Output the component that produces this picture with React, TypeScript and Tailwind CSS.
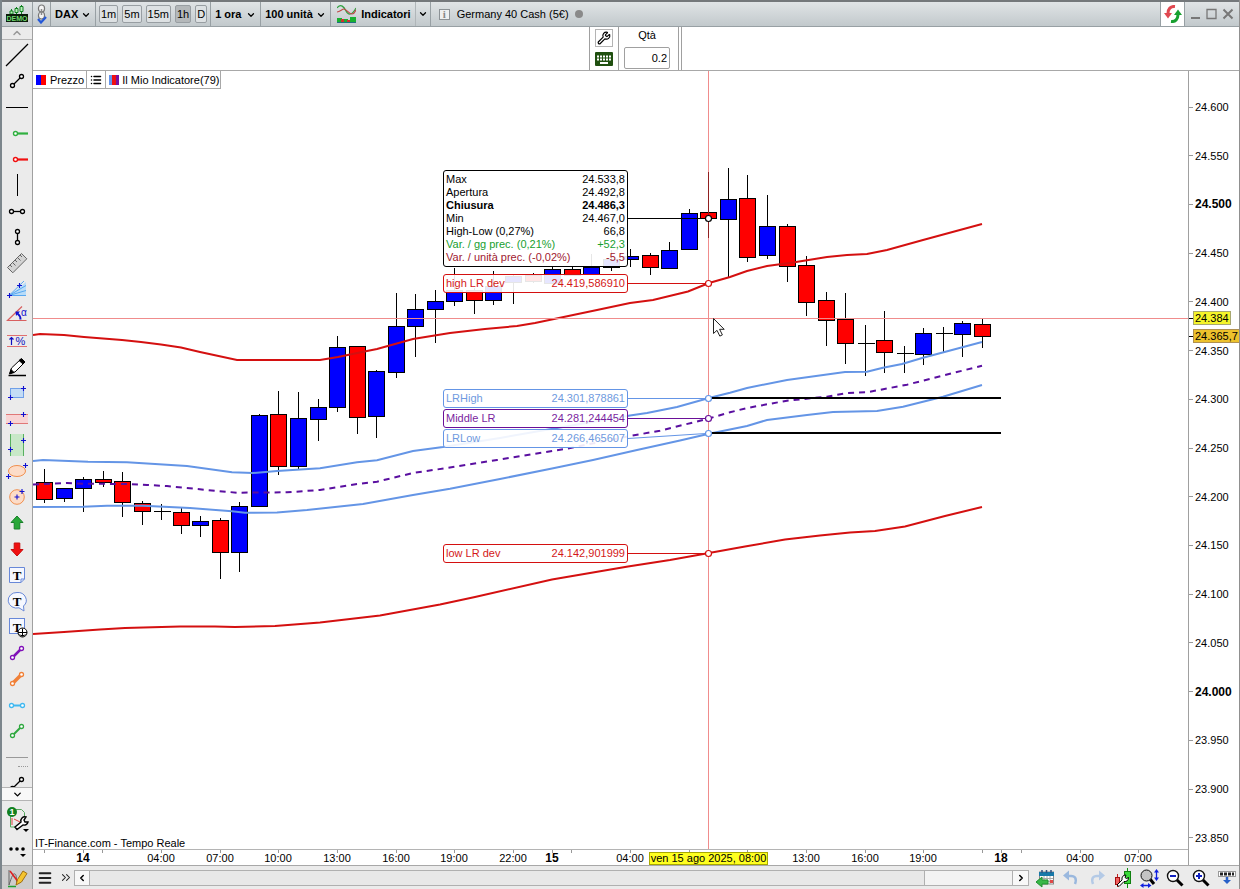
import {ReactNode} from 'react';
import {ChevronDown, ChevronLeft, ChevronRight, ChevronUp, ChevronsRight, List, Menu, Wrench} from 'lucide-react';

const BLUE = '#0000ff';
const RED = '#ff0000';

// [high, body top, body bottom, low, direction]
type Candle = [number, number, number, number, 'up' | 'down' | 'flat'];

const candles: Candle[] = [
	[469, 482, 499, 502, 'down'],
	[488, 488, 498, 501, 'up'],
	[477, 479, 488, 511, 'up'],
	[471, 479, 482, 486, 'down'],
	[472, 481, 502, 516, 'down'],
	[501, 503, 511, 524, 'down'],
	[504, 511, 511, 519, 'flat'],
	[508, 512, 525, 533, 'down'],
	[516, 521, 525, 536, 'up'],
	[518, 520, 552, 578, 'down'],
	[502, 506, 552, 571, 'up'],
	[414, 415, 506, 506, 'up'],
	[391, 414, 466, 474, 'down'],
	[392, 418, 466, 469, 'up'],
	[399, 407, 419, 440, 'up'],
	[336, 347, 407, 411, 'up'],
	[346, 346, 417, 433, 'down'],
	[370, 371, 416, 437, 'up'],
	[293, 326, 372, 377, 'up'],
	[294, 309, 326, 356, 'up'],
	[290, 301, 309, 342, 'up'],
	[268, 290, 301, 305, 'up'],
	[288, 290, 300, 313, 'down'],
	[271, 286, 300, 304, 'up'],
	[274, 276, 282, 303, 'up'],
	[273, 275, 281, 282, 'down'],
	[266, 269, 283, 283, 'up'],
	[267, 269, 275, 275, 'down'],
	[254, 267, 274, 274, 'up'],
	[250, 259, 267, 270, 'up'],
	[249, 256, 259, 266, 'up'],
	[253, 255, 267, 274, 'down'],
	[242, 250, 268, 268, 'up'],
	[209, 213, 249, 249, 'up'],
	[172, 212, 218, 238, 'down'],
	[168, 199, 219, 276, 'up'],
	[175, 198, 257, 261, 'down'],
	[195, 226, 255, 258, 'up'],
	[224, 226, 266, 281, 'down'],
	[256, 265, 302, 315, 'down'],
	[292, 300, 320, 345, 'down'],
	[293, 319, 343, 363, 'down'],
	[325, 343, 343, 375, 'flat'],
	[311, 340, 352, 372, 'down'],
	[346, 353, 353, 372, 'flat'],
	[328, 333, 354, 364, 'up'],
	[327, 333, 333, 351, 'flat'],
	[321, 323, 334, 356, 'up'],
	[319, 324, 336, 347, 'down'],
];

const barX = (i: number) => Math.round(44 + 19.54 * i) + 0.5;

const highDev =
	'33,335 40,334 64,335 84,337 103,338.5 122,340 141,342 161,344.5 181,347.5 200,352 237,360 320,360 338,357 367,351 377,349 413,339 450,333 485,329 517,326 535,323 597,310 630,303 653,300 688,291.5 709,283 730,277 747,271 767,266 793,262.5 827,257 847,255 867,254 887,250 923,240 982,224';
const lrHigh =
	'33,461 43,460 88,461.7 127,462.3 187,466 232,472.3 253,473 277,471 320,468.3 357,462.3 377,460.3 413,451 443,447 500,438 557,428 630,415.5 647,413 677,407 709,398 730,392.7 747,388 787,380 845,372 867,371.7 883,367.7 902,364 923,357.7 982,342';
const lrMiddle =
	'33,484.5 67,483 83,483.7 127,484 147,485 167,486 207,490 237,492.7 287,492.3 320,490 357,484 377,481.7 413,473 447,468 497,460 565,449 630,436 660,430.7 709,418.5 730,412.3 747,408 787,400.7 827,396.7 847,393 867,392.3 907,384.7 982,365.7';
const lrLow =
	'33,507 83,506.7 107,505.7 143,505.7 190,508 232,511.3 245,512.7 277,512.5 307,510 363,504 413,495 450,488.7 500,479 552,468.5 593,460 637,450 680,440.5 709,433.7 747,426 767,420 807,415 833,412 877,411 903,406.7 943,396.7 982,385';
const lowDev =
	'33,634 64,632 100,629.5 125,628 180,626.5 215,626.5 235,627 275,626 320,622.5 380,615.5 440,604.5 475,597 552,579.5 628,566.5 670,560 709,553 745,546.5 785,539.5 820,535.5 850,532.5 875,531 905,526.5 945,516 982,507';

const timeLabels: [number, string, boolean?][] = [
	[83, '14', true],
	[161, '04:00'],
	[220, '07:00'],
	[278, '10:00'],
	[337, '13:00'],
	[396, '16:00'],
	[454, '19:00'],
	[513, '22:00'],
	[552, '15', true],
	[630, '04:00'],
	[806, '13:00'],
	[865, '16:00'],
	[923, '19:00'],
	[1001, '18', true],
	[1080, '04:00'],
	[1138, '07:00'],
];
const timeTicks = [44, 83, 102, 161, 220, 278, 337, 396, 454, 513, 552, 571, 630, 689, 747, 806, 865, 923, 982, 1001, 1021, 1080, 1138];

const prices = [
	'24.600', '24.550', '24.500', '24.450', '24.400', '24.350', '24.300', '24.250',
	'24.200', '24.150', '24.100', '24.050', '24.000', '23.950', '23.900', '23.850',
];

function Plot() {
	return (
		<svg className="absolute inset-0 h-full w-full" aria-hidden="true">
			<g transform="translate(-33 -71)">
				{candles.map(([high, top, bottom, low, dir], i) => {
					const x = barX(i);
					return (
						<g key={i} stroke="#000" shapeRendering="crispEdges">
							<line x1={x} x2={x} y1={high} y2={low + 1} />
							{dir === 'flat' ? (
								<line x1={x - 8} x2={x + 9} y1={top + 0.5} y2={top + 0.5} />
							) : (
								<rect x={x - 8} y={top + 0.5} width="16" height={bottom - top} fill={dir === 'up' ? BLUE : RED} />
							)}
						</g>
					);
				})}
				<g fill="none" strokeWidth="2">
					<polyline points={highDev} stroke="#d41010" />
					<polyline points={lowDev} stroke="#d41010" />
					<polyline points={lrHigh} stroke="#6495e6" />
					<polyline points={lrLow} stroke="#6495e6" />
					<polyline points={lrMiddle} stroke="#5a0fa0" strokeDasharray="6 5" />
				</g>
				<g stroke="#000" strokeWidth="2" shapeRendering="crispEdges">
					<line x1="709" x2="1001" y1="398" y2="398" />
					<line x1="709" x2="1001" y1="433" y2="433" />
				</g>
				<g stroke="#f08c8c" shapeRendering="crispEdges">
					<line x1="708.5" x2="708.5" y1="71" y2="850" />
					<line x1="33" x2="1189" y1="318.5" y2="318.5" />
				</g>
				<line x1="708.5" x2="708.5" y1="172" y2="238" stroke="#902020" />
				<g shapeRendering="crispEdges">
					<path d="M628 218.5H706" stroke="#000" />
					<path d="M628 283.5H706M628 553.5H706" stroke="#d41010" />
					<path d="M628 398.5H706" stroke="#6495e6" />
					<path d="M628 418.5H706" stroke="#6a0f98" />
				</g>
				<path d="M628 438.5L706 433.5" stroke="#6495e6" />
				<g strokeWidth="1.2" fill="#fff">
					<circle cx="708.5" cy="218.5" r="3" stroke="#000" />
					<circle cx="708.5" cy="283.5" r="3" stroke="#d41010" />
					<circle cx="708.5" cy="398.5" r="3" stroke="#6495e6" />
					<circle cx="708.5" cy="418.5" r="3" stroke="#6a0f98" />
					<circle cx="708.5" cy="433.5" r="3" stroke="#6495e6" />
					<circle cx="708.5" cy="553.5" r="3" stroke="#d41010" />
				</g>
				<path d="M713.5 318.5v15l3.5-3.2 2.8 5.8 2.6-1.2-2.8-5.6h4.6z" fill="#fff" stroke="#222" />
			</g>
		</svg>
	);
}

function TimeAxis() {
	return (
		<div className="relative h-4 shrink-0 border-t border-[#b4b4b4]">
			<svg className="absolute inset-0 h-full w-full">
				<g transform="translate(-33 0)" fontFamily="Liberation Sans, Arial, sans-serif">
					{timeTicks.map((x) => (
						<line key={x} x1={x + 0.5} x2={x + 0.5} y1="0" y2="3" stroke="#999" />
					))}
					{timeLabels.map(([x, label, bold]) => (
						<text key={x} x={x} y="12" textAnchor="middle" fontSize={bold ? 12 : 11} fontWeight={bold ? 700 : 400}>
							{label}
						</text>
					))}
				</g>
			</svg>
			<div className="absolute top-[2px] left-[616px] w-[119px] border border-[#a8a800] bg-[#ffff20] text-center leading-[11px]">
				ven 15 ago 2025, 08:00
			</div>
		</div>
	);
}

function PriceAxis() {
	return (
		<div className="relative w-[51px] shrink-0 border-l border-[#a0a0a0]">
			<div className="flex h-full flex-col justify-between pt-7 pb-[19px]">
				{prices.map((p) => (
					<div key={p} className="flex items-center gap-[2px] leading-4">
						<span className="h-px w-1 bg-[#999]" />
						<span className={p === '24.500' || p === '24.000' ? 'text-xs leading-4 font-bold' : ''}>{p}</span>
					</div>
				))}
			</div>
			<div className="absolute top-[240px] left-0 flex items-center">
				<span className="h-px w-1 bg-black" />
				<span className="border border-[#a8a870] bg-[#f4f42a] px-px leading-3">24.384</span>
			</div>
			<div className="absolute top-[258px] left-0 flex items-center">
				<span className="h-px w-1 bg-black" />
				<span className="border border-[#b09050] bg-[#ecc12c] px-px leading-3">24.365,7</span>
			</div>
		</div>
	);
}

const details = [
	['Max', '24.533,8', ''],
	['Apertura', '24.492,8', ''],
	['Chiusura', '24.486,3', 'font-bold'],
	['Min', '24.467,0', ''],
	['High-Low (0,27%)', '66,8', ''],
	['Var. / gg prec. (0,21%)', '+52,3', 'text-[#18a030]'],
	['Var. / unità prec. (-0,02%)', '-5,5', 'text-[#a02030]'],
];

const readouts = [
	['high LR dev', '24.419,586910', 'top-[203px] border-[#d41010] text-[#d41818]'],
	['LRHigh', '24.301,878861', 'top-[318px] border-[#6495e6] text-[#6f9ae0]'],
	['Middle LR', '24.281,244454', 'top-[338px] border-[#6a0f98] text-[#7a1fa0]'],
	['LRLow', '24.266,465607', 'top-[358px] border-[#6495e6] text-[#6f9ae0]'],
	['low LR dev', '24.142,901999', 'top-[473px] border-[#d41010] text-[#d41818]'],
];

function Readouts() {
	return (
		<>
			<div className="absolute top-[99px] left-[410px] w-[185px] rounded-[3px] border border-black bg-white/90 px-[2px] py-[2px] leading-[13px]">
				{details.map(([label, value, cls]) => (
					<div key={label} className={`flex justify-between ${cls}`}>
						<span>{label}</span>
						<span>{value}</span>
					</div>
				))}
			</div>
			{readouts.map(([label, value, cls]) => (
				<div
					key={label}
					className={`absolute left-[410px] flex h-[19px] w-[185px] justify-between rounded-[3px] border bg-white/90 px-[2px] leading-[17px] ${cls}`}
				>
					<span>{label}</span>
					<span>{value}</span>
				</div>
			))}
		</>
	);
}

function Segment({color, width = 1.3, dir = 'diag'}: {color: string; width?: number; dir?: 'diag' | 'h' | 'v'}) {
	const [x1, y1, x2, y2] = dir === 'diag' ? [7.5, 16.5, 16.5, 7.5] : dir === 'h' ? [6.5, 12.5, 17.5, 12.5] : [12.5, 6.5, 12.5, 17.5];
	return (
		<>
			<line x1={x1} y1={y1} x2={x2} y2={y2} stroke={color} strokeWidth={width} />
			<circle cx={x1} cy={y1} r="2" fill="#fff" stroke={color} strokeWidth="1.3" />
			<circle cx={x2} cy={y2} r="2" fill="#fff" stroke={color} strokeWidth="1.3" />
		</>
	);
}

function Plus({x, y}: {x: number; y: number}) {
	return <path d={`M${x - 2} ${y}h5M${x + 0.5} ${y - 2.5}v5`} stroke="#1010d0" strokeWidth="1.1" />;
}

function Letter() {
	return (
		<text x="12" y="16.5" textAnchor="middle" fontFamily="Liberation Serif, serif" fontWeight="700" fontSize="13" fill="#000">
			T
		</text>
	);
}

const tools: [string, ReactNode][] = [
	['Linea', <path d="M1 23L23 1" stroke="#000" strokeWidth="1.2" />],
	['Segmento', <Segment color="#000" />],
	['Linea orizzontale', <path d="M1 12.5H23" stroke="#000" />],
	['Acquisto', (
		<g stroke="#30b040">
			<path d="M12.5 12.5H23" strokeWidth="2.2" />
			<circle cx="10.5" cy="12.5" r="2" fill="#fff" strokeWidth="1.4" />
		</g>
	)],
	['Vendita', (
		<g stroke="#f01010">
			<path d="M12.5 12.5H23" strokeWidth="2.2" />
			<circle cx="10.5" cy="12.5" r="2" fill="#fff" strokeWidth="1.4" />
		</g>
	)],
	['Linea verticale', <path d="M12.5 1V23" stroke="#000" />],
	['Segmento orizzontale', <Segment color="#000" dir="h" />],
	['Segmento verticale', <Segment color="#000" dir="v" />],
	['Righello', (
		<g stroke="#666">
			<path d="M2.5 16.5L16.5 2.5L21.8 7.8L7.8 21.8z" fill="#d4d4d4" />
			<path d="M5 14l2 2M7.5 11.5l3 3M10 9l2 2M12.5 6.5l3 3M15 4l2 2" />
		</g>
	)],
	['Ventaglio', (
		<>
			<path d="M4 18.5L21 5v13.5z" fill="#b8dcf8" />
			<path d="M4 18.5L19 4M4 18.5L21 8.5M4 18.5L21 13.5M4 18.5H21" stroke="#58a8f0" />
			<Plus x={4} y={18.5} />
			<Plus x={14} y={8.5} />
		</>
	)],
	['Angolo', (
		<>
			<path d="M17 3.5L2.5 17.5H21.5" stroke="#d86060" strokeWidth="1.2" />
			<path d="M15.5 16.5c0-3-1-4.5-3-6" stroke="#1010d0" strokeWidth="2" />
			<path d="M10.5 8.5h4.5l-4 4.5z" fill="#1010d0" />
			<text x="16" y="13" fontSize="10" fill="#1010d0" fontFamily="Liberation Sans, sans-serif">α</text>
		</>
	)],
	['Variazione percentuale', (
		<>
			<path d="M2 6.5H22M2 17.5H22" stroke="#e07070" />
			<path d="M6.5 16V8.5M4.5 10.5l2-2 2 2" stroke="#1010c0" strokeWidth="1.2" />
			<text x="10.5" y="16" fontSize="11" fill="#1010c0" fontFamily="Liberation Sans, sans-serif">%</text>
		</>
	)],
	['Matita', (
		<g stroke="#000">
			<path d="M3.5 20.5H21" strokeWidth="1.5" />
			<path d="M5 18l1.5-5L16 4l3.5 3.5L10 17z" fill="#fff" />
			<path d="M14 5.5L16.5 3.5 20 7l-2 2zM4.5 19l1.5-4.5 3 3z" fill="#000" />
		</g>
	)],
	['Rettangolo', (
		<>
			<rect x="5.5" y="7.5" width="13" height="9" fill="#c4dcf6" stroke="#70a0e8" />
			<Plus x={18} y={7.5} />
			<Plus x={5} y={16.5} />
		</>
	)],
	['Canale orizzontale', (
		<>
			<path d="M1 7.5H23V16.5H1z" fill="#f8d4d4" />
			<path d="M1 7.5H23M1 16.5H23" stroke="#e07878" />
			<Plus x={18} y={7.5} />
			<Plus x={5} y={16.5} />
		</>
	)],
	['Canale verticale', (
		<>
			<path d="M5.5 1V23H18.5V1z" fill="#c8e8c8" />
			<path d="M5.5 1V23M18.5 1V23" stroke="#58b060" />
			<Plus x={18} y={7.5} />
			<Plus x={5} y={16.5} />
		</>
	)],
	['Ellisse', (
		<>
			<ellipse cx="12" cy="12" rx="8.5" ry="5.5" fill="#fcdcc8" stroke="#f09050" />
			<Plus x={20} y={6.5} />
			<Plus x={3} y={17.5} />
		</>
	)],
	['Cerchio', (
		<>
			<circle cx="12" cy="12" r="7.3" fill="#fcdcc8" stroke="#f09050" />
			<Plus x={11.5} y={12} />
			<Plus x={16.5} y={6.5} />
		</>
	)],
	['Freccia su', <path d="M12 5l6 6.5h-3.2V18H9.2v-6.5H6z" fill="#28a838" stroke="#18802a" />],
	['Freccia giù', <path d="M12 19l6-6.5h-3.2V6H9.2v6.5H6z" fill="#f01010" stroke="#c80c0c" />],
	['Nota', (
		<>
			<path d="M4.5 4.5h15V16l-3.5 3.5H4.5zM16 19.5V16h3.5" fill="#f6f8ff" stroke="#6888d8" />
			<Letter />
		</>
	)],
	['Fumetto', (
		<>
			<path d="M12 3.5a8.5 7.8 0 1 0 2 15.3l5 3.2-.5-5A8.5 7.8 0 0 0 12 3.5z" fill="#f6f8ff" stroke="#6888d8" />
			<Letter />
		</>
	)],
	['Testo ancorato', (
		<>
			<rect x="4.5" y="3.5" width="15" height="15" fill="#f6f8ff" stroke="#6888d8" />
			<Letter />
			<circle cx="17.5" cy="17.5" r="4.5" fill="#fff" stroke="#000" />
			<path d="M13 17.5h9M17.5 13.5v8M14.5 19.5c1 1.5 5 1.5 6 0" stroke="#000" />
		</>
	)],
	['Segmento viola', <Segment color="#8010b8" width={2.5} />],
	['Segmento arancio', <Segment color="#f08038" width={3.5} />],
	['Segmento azzurro', <Segment color="#40b8f0" width={2} dir="h" />],
	['Segmento verde', <Segment color="#30a840" width={2} />],
];

function ToolIcon({children}: {children: ReactNode}) {
	return (
		<svg width="24" height="24" viewBox="0 0 24 24" fill="none" aria-hidden="true">
			{children}
		</svg>
	);
}

function Sidebar() {
	return (
		<aside className="flex w-[31px] shrink-0 flex-col border-r border-[#a0a0a0] bg-[#ebebeb]">
			<button aria-label="Scorri su" className="flex h-[13px] shrink-0 items-center justify-center border-b border-[#b4b4b4]">
				<ChevronUp size={12} strokeWidth={3} color="#999" />
			</button>
			<div className="flex min-h-0 flex-1 flex-col items-center overflow-hidden pt-[2px]">
				{tools.map(([name, icon]) => (
					<button key={name} title={name} className="flex h-[26px] w-full shrink-0 items-center justify-center">
						<ToolIcon>{icon}</ToolIcon>
					</button>
				))}
				<div className="mt-[13px] w-[22px] shrink-0 border-t border-[#999]" />
				<div className="mt-2 ml-3 w-[10px] shrink-0 border-t border-dotted border-[#999]" />
				<button title="Preferiti" className="mt-1 flex h-[26px] w-full shrink-0 items-center justify-center">
					<ToolIcon><Segment color="#000" /></ToolIcon>
				</button>
			</div>
			<button aria-label="Scorri giù" className="flex h-[14px] shrink-0 items-center justify-center border-y border-[#b4b4b4] bg-[#f8f8f8]">
				<ChevronDown size={11} color="#000" strokeWidth={3} />
			</button>
			<button title="Impostazioni oggetti" className="flex h-9 shrink-0 items-center justify-center">
				<svg width="24" height="28" viewBox="0 0 24 28" fill="none" aria-hidden="true">
					<path d="M10.5 4.5h6l3 3V19M5.5 11v11h6" stroke="#58a860" />
					<path d="M7 20v-7M9 14l6 3" stroke="#e04040" />
					<path d="M10 22l6-5a4 4 0 0 1 5-5l-2 3 1 2h3a4 4 0 0 1-5 3l-6 4.5z" fill="#fff" stroke="#000" strokeWidth="1.4" />
					<circle cx="7" cy="7" r="5" fill="#108020" />
					<text x="7" y="10" textAnchor="middle" fontSize="9" fontWeight="700" fill="#fff" fontFamily="Liberation Sans, sans-serif">1</text>
					<path d="M18 24h6l-3 3z" fill="#000" />
				</svg>
			</button>
			<button title="Altro" className="flex h-7 shrink-0 items-center justify-center">
				<svg width="24" height="16" viewBox="0 0 24 16" aria-hidden="true">
					<circle cx="6" cy="6" r="1.8" />
					<circle cx="12" cy="6" r="1.8" />
					<circle cx="18" cy="6" r="1.8" />
					<path d="M15 11h6l-3 3z" />
				</svg>
			</button>
			<button title="Disegno" className="flex h-6 shrink-0 items-center justify-center border-t border-[#a8a8a8] bg-[#cdcdcd]">
				<svg width="24" height="22" viewBox="0 0 24 22" fill="none" aria-hidden="true">
					<path d="M4 3v15M4 18c3-9 4-12 6-11s1 6 2 10" stroke="#666" />
					<path d="M5 4l9 12" stroke="#e02020" strokeWidth="1.5" />
					<path d="M3 19.5h8" stroke="#20a030" strokeWidth="1.5" />
					<path d="M11 18l1.5-5.5L18 4l4 2.5L16.5 15z" fill="#f4c430" stroke="#a07010" />
				</svg>
			</button>
		</aside>
	);
}

function DropDown({label, value, className}: {label: string; value: string; className: string}) {
	return (
		<div className={`relative border-r border-[#98a0a4] ${className}`}>
			<select aria-label={label} className="h-full w-full appearance-none bg-transparent pl-1 font-bold">
				<option>{value}</option>
			</select>
			<ChevronDown size={10} strokeWidth={3} className="pointer-events-none absolute top-2 right-1" />
		</div>
	);
}

function TopBar() {
	return (
		<header className="flex h-[27px] shrink-0 border-t-2 border-b border-t-[#74787b] border-b-[#98a0a4] bg-linear-to-b from-[#e0e4e6] to-[#c2c9cc]">
			<div className="flex w-[31px] items-center justify-center border-r border-[#98a0a4]">
				<svg width="24" height="18" viewBox="0 0 24 18" aria-hidden="true">
					<path d="M6.5 4v5M11.5 2v7M16.5 0v9" stroke="#108020" />
					<path d="M5 6h3v3H5zM10 3.5h3v4h-3zM15 1.5h3v5h-3z" fill="#b8f0b8" stroke="#108020" />
					<rect x="1" y="9" width="22" height="8" fill="#0a1c0a" />
					<text x="12" y="16" textAnchor="middle" fontSize="7" fontWeight="700" fill="#70d870" fontFamily="Liberation Sans, sans-serif">DEMO</text>
				</svg>
			</div>
			<button aria-label="Collega" className="flex w-[18px] items-center justify-center border-r border-[#98a0a4]">
				<svg width="12" height="20" viewBox="0 0 12 20" fill="none" aria-hidden="true">
					<rect x="2.5" y="1" width="6" height="7" rx="3" fill="#f4f4f4" stroke="#777" strokeWidth="1.2" />
					<rect x="2.5" y="8" width="6" height="7" rx="3" fill="#f4f4f4" stroke="#777" strokeWidth="1.2" />
					<path d="M5.5 5v6" stroke="#888" strokeWidth="1.5" />
					<path d="M2 15l3 3.5L10 13" stroke="#2458d8" strokeWidth="2.2" />
				</svg>
			</button>
			<DropDown label="Strumento" value="DAX" className="w-[45px]" />
			<div className="flex items-center gap-1 border-r border-[#98a0a4] px-[3px]">
				{['1m', '5m', '15m', '1h', 'D'].map((t) => (
					<button
						key={t}
						className={`h-[18px] rounded-[2px] border border-[#989ea2] px-px ${t === '1h' ? 'bg-[#b4b8ba]' : 'bg-[#dde1e3]'}`}
					>
						{t}
					</button>
				))}
			</div>
			<DropDown label="Unità di tempo" value="1 ora" className="w-[50px]" />
			<DropDown label="Storico" value="100 unità" className="w-[70px]" />
			<button className="flex items-center gap-[5px] border-r border-[#b0b6b9] pr-1 pl-[6px] font-bold">
				<svg width="19" height="20" viewBox="0 0 19 20" fill="none" aria-hidden="true">
					<path d="M0 4c4-5 7-1 9 3s6 5 10-3" stroke="#30a040" strokeWidth="1.2" />
					<path d="M0 8c3 0 5-3 7-3s5 5 8 5 3-3 4-4" stroke="#c04848" strokeWidth="1.2" />
					<path d="M0 14h5v5H0zM6 15h5v4H6zM13 13h6v6h-6z" fill="#18b030" />
					<path d="M4 15h3v4H4zM10 16h3v3h-3z" fill="#d03030" />
					<path d="M0 18.5h19" stroke="#207080" />
				</svg>
				Indicatori
			</button>
			<button aria-label="Altri indicatori" className="flex w-[15px] items-center justify-center border-r border-[#98a0a4]">
				<ChevronDown size={10} strokeWidth={3} />
			</button>
			<div className="flex items-center gap-[7px] pl-2">
				<span className="flex size-[11px] items-center justify-center border border-[#8c9296] bg-[#eef0f1] font-['Liberation_Serif',serif] leading-[9px] font-bold text-[#888]">
					i
				</span>
				<span>Germany 40 Cash (5€)</span>
				<span className="-ml-px size-2 rounded-full bg-[#8a8a8a]" />
			</div>
			<div className="ml-auto flex">
				<button aria-label="Aggiorna" className="flex w-[25px] items-center justify-center border-x border-[#98a0a4] bg-white">
					<svg width="18" height="18" viewBox="0 0 18 18" fill="none" aria-hidden="true">
						<path d="M11 1.5C6.5 1 4 4 4 8.5" stroke="#e04850" strokeWidth="3" />
						<path d="M0 8h8l-4 5.5z" fill="#e04850" />
						<path d="M7 16.5c4.5.5 7-2.5 7-7" stroke="#18a030" strokeWidth="3" />
						<path d="M10 10h8l-4-5.5z" fill="#18a030" />
					</svg>
				</button>
				<div className="flex items-center gap-[5px] px-[5px]">
					<button aria-label="Riduci">
						<svg width="11" height="12" viewBox="0 0 11 12"><path d="M1 10h9" stroke="#777" strokeWidth="2" /></svg>
					</button>
					<button aria-label="Ingrandisci">
						<svg width="11" height="12" viewBox="0 0 11 12"><path d="M1 1.5h9v9H1z" fill="none" stroke="#777" strokeWidth="1.3" /></svg>
					</button>
					<button aria-label="Chiudi">
						<svg width="12" height="12" viewBox="0 0 12 12"><path d="M1.5 1.5l9 9M10.5 1.5l-9 9" stroke="#777" strokeWidth="2" /></svg>
					</button>
				</div>
			</div>
		</header>
	);
}

function OrderBar() {
	return (
		<div className="flex h-11 shrink-0 border-b border-[#a8a8a8] bg-white">
			<div className="ml-[556px] flex w-[30px] flex-col items-center gap-[5px] border-x border-[#a0a0a0] pt-[2px]">
				<button aria-label="Configura" className="flex size-[18px] items-center justify-center border border-[#b4b4b4]">
					<Wrench size={14} strokeWidth={2} />
				</button>
				<button aria-label="Tastiera">
					<svg width="18" height="14" viewBox="0 0 18 14" aria-hidden="true">
						<rect width="18" height="14" rx="1" fill="#205010" />
						<path d="M2 4.5h14M2 7.5h14" stroke="#fff" strokeWidth="2" strokeDasharray="2 1" />
						<path d="M5 11h8" stroke="#fff" strokeWidth="2" />
					</svg>
				</button>
			</div>
			<div className="flex flex-col items-center pr-2 pl-[5px]">
				<label htmlFor="qty" className="leading-4">Qtà</label>
				<input
					id="qty"
					defaultValue="0.2"
					className="mt-1 h-[22px] w-[46px] rounded-[2px] border border-[#a0a0a0] px-[2px] text-right"
				/>
			</div>
			<div className="w-1 border-x border-[#a0a0a0]" />
		</div>
	);
}

function Legend() {
	return (
		<div className="absolute top-0 left-0 flex h-[18px] border-r border-b border-[#a8a8a8] bg-white leading-4">
			<span className="flex items-center gap-1 border-r border-[#a8a8a8] pr-[2px] pl-[3px]">
				<span className="flex h-[10px]">
					<span className="w-[5px] bg-[#0000ff]" />
					<span className="w-[5px] bg-[#ff0000]" />
				</span>
				Prezzo
			</span>
			<button aria-label="Elenco" className="flex w-[19px] items-center justify-center border-r border-[#a8a8a8]">
				<List size={12} strokeWidth={3} />
			</button>
			<span className="flex items-center gap-[3px] pr-px pl-[3px]">
				<span className="flex h-[10px]">
					<span className="w-[3px] bg-[#6495ed]" />
					<span className="w-1 bg-[#f01010]" />
					<span className="w-[3px] bg-[#7a10a0]" />
				</span>
				Il Mio Indicatore(79)
			</span>
		</div>
	);
}

function Magnifier({children}: {children?: ReactNode}) {
	return (
		<svg width="20" height="20" viewBox="0 0 20 20" fill="none" aria-hidden="true">
			<path d="M11.5 11.5l6 6" stroke="#000" strokeWidth="3" />
			<circle cx="8" cy="8" r="5.5" fill="#fff" stroke="#111" strokeWidth="1.4" />
			{children}
		</svg>
	);
}

function BottomBar() {
	return (
		<footer className="flex h-6 shrink-0 items-center border-t border-[#a8a8a8] bg-[#ebebeb]">
			<button aria-label="Menu" className="ml-1 flex w-4 justify-center">
				<Menu size={16} strokeWidth={3} color="#222" />
			</button>
			<button aria-label="Espandi" className="ml-[6px] flex w-[14px] justify-center">
				<ChevronsRight size={15} strokeWidth={1.8} color="#222" />
			</button>
			<div className="ml-px flex h-4 flex-1 border border-[#b0b0b0] bg-[#e8e8e8]">
				<button aria-label="Indietro" className="flex w-[15px] items-center justify-center border-r border-[#b0b0b0] bg-[#f8f8f8]">
					<ChevronLeft size={10} strokeWidth={3.5} />
				</button>
				<div className="flex-1" />
				<div className="w-[88px] border-l border-[#b0b0b0] bg-[#f3f3f3]" />
				<button aria-label="Avanti" className="flex w-4 items-center justify-center border-l border-[#b0b0b0] bg-[#f8f8f8]">
					<ChevronRight size={10} strokeWidth={3.5} />
				</button>
			</div>
			<div className="flex items-center gap-[6px] pr-[2px] pl-[6px]">
				<button title="Vai alla data">
					<svg width="20" height="20" viewBox="0 0 20 20" fill="none" aria-hidden="true">
						<rect x="4.5" y="4" width="14" height="12" fill="#fff" stroke="#888" />
						<path d="M4 4h15v4H4z" fill="#1878a8" />
						<path d="M7 2v3M11.5 2v3M16 2v3" stroke="#305080" strokeWidth="1.5" />
						<path d="M5 10.5h13M5 13.5h13M9 8v8M12 8v8M15 8v8" stroke="#aaa" />
						<path d="M15 12h3v3h-3z" fill="#e04848" />
						<path d="M1 14l6-5v3h6v4H7v3z" fill="#38b848" stroke="#209030" />
					</svg>
				</button>
				<button title="Annulla">
					<svg width="20" height="20" viewBox="0 0 20 20" fill="none" aria-hidden="true">
						<path d="M6 8h4c4 0 6 2.5 4 8" stroke="#9ab8de" strokeWidth="2.5" />
						<path d="M8 2.5v10L2 7.5z" fill="#9ab8de" />
					</svg>
				</button>
				<button title="Ripeti">
					<svg width="20" height="20" viewBox="0 0 20 20" fill="none" aria-hidden="true">
						<path d="M14 8h-4c-4 0-6 2.5-4 8" stroke="#b4cae6" strokeWidth="2.5" />
						<path d="M12 2.5v10l6-5z" fill="#b4cae6" />
					</svg>
				</button>
				<button title="Stile grafico">
					<svg width="20" height="20" viewBox="0 0 20 20" fill="none" aria-hidden="true">
						<path d="M4.5 6v13" stroke="#c02020" />
						<rect x="2.5" y="9.5" width="4" height="7" fill="#f06060" stroke="#a01010" />
						<path d="M14.5 0v20" stroke="#109010" />
						<rect x="11.5" y="3.5" width="6" height="12" fill="#38d838" stroke="#108010" />
						<path d="M4 17l5-5c-.5-3 1-5 4-5l-1 2.5 1.5 1 2-1c0 3-2 4.5-4.5 4l-5 5z" fill="#fff" stroke="#000" />
					</svg>
				</button>
				<button title="Zoom automatico">
					<svg width="20" height="20" viewBox="0 0 20 20" fill="none" aria-hidden="true">
						<path d="M11 11l4 5" stroke="#000" strokeWidth="3" />
						<circle cx="7.5" cy="7.5" r="5.5" fill="#c4c4c4" stroke="#111" />
						<path d="M17.5 3v8M3 17.5h7" stroke="#1020e0" strokeWidth="1.3" />
						<path d="M15 4.5L17.5 1 20 4.5zM15 9.5l2.5 3.5L20 9.5zM4.5 15L1 17.5 4.5 20zM9 15l3.5 2.5L9 20z" fill="#1020e0" />
					</svg>
				</button>
				<button title="Riduci zoom"><Magnifier><path d="M5 8h6" stroke="#1020c0" strokeWidth="2" /></Magnifier></button>
				<button title="Aumenta zoom"><Magnifier><path d="M5 8h6M8 5v6" stroke="#1020c0" strokeWidth="2" /></Magnifier></button>
				<button title="Barra inferiore">
					<svg width="20" height="20" viewBox="0 0 20 20" fill="none" aria-hidden="true">
						<rect x="1.5" y="3.5" width="17" height="5" fill="#fff" stroke="#999" />
						<path d="M3 6h14" stroke="#222" strokeWidth="3" strokeDasharray="3 1" />
						<path d="M10 9v4" stroke="#2860c8" strokeWidth="2.5" />
						<path d="M6 12h8l-4 4z" fill="#2860c8" />
					</svg>
				</button>
			</div>
		</footer>
	);
}

export default function App() {
	return (
		<div className="flex h-screen flex-col overflow-hidden border-r border-l-2 border-r-[#909090] border-l-[#7c868c] bg-white font-['Liberation_Sans',Arial,sans-serif] text-[11px] text-black">
			<TopBar />
			<div className="flex min-h-0 flex-1">
				<Sidebar />
				<main className="flex min-w-0 flex-1 flex-col">
					<OrderBar />
					<div className="flex min-h-0 flex-1">
						<div className="flex min-w-0 flex-1 flex-col">
							<div className="relative min-h-0 flex-1 overflow-hidden">
								<Plot />
								<Legend />
								<Readouts />
								<span className="absolute bottom-0 left-[2px] leading-3">IT-Finance.com - Tempo Reale</span>
							</div>
							<TimeAxis />
						</div>
						<PriceAxis />
					</div>
					<BottomBar />
				</main>
			</div>
		</div>
	);
}
